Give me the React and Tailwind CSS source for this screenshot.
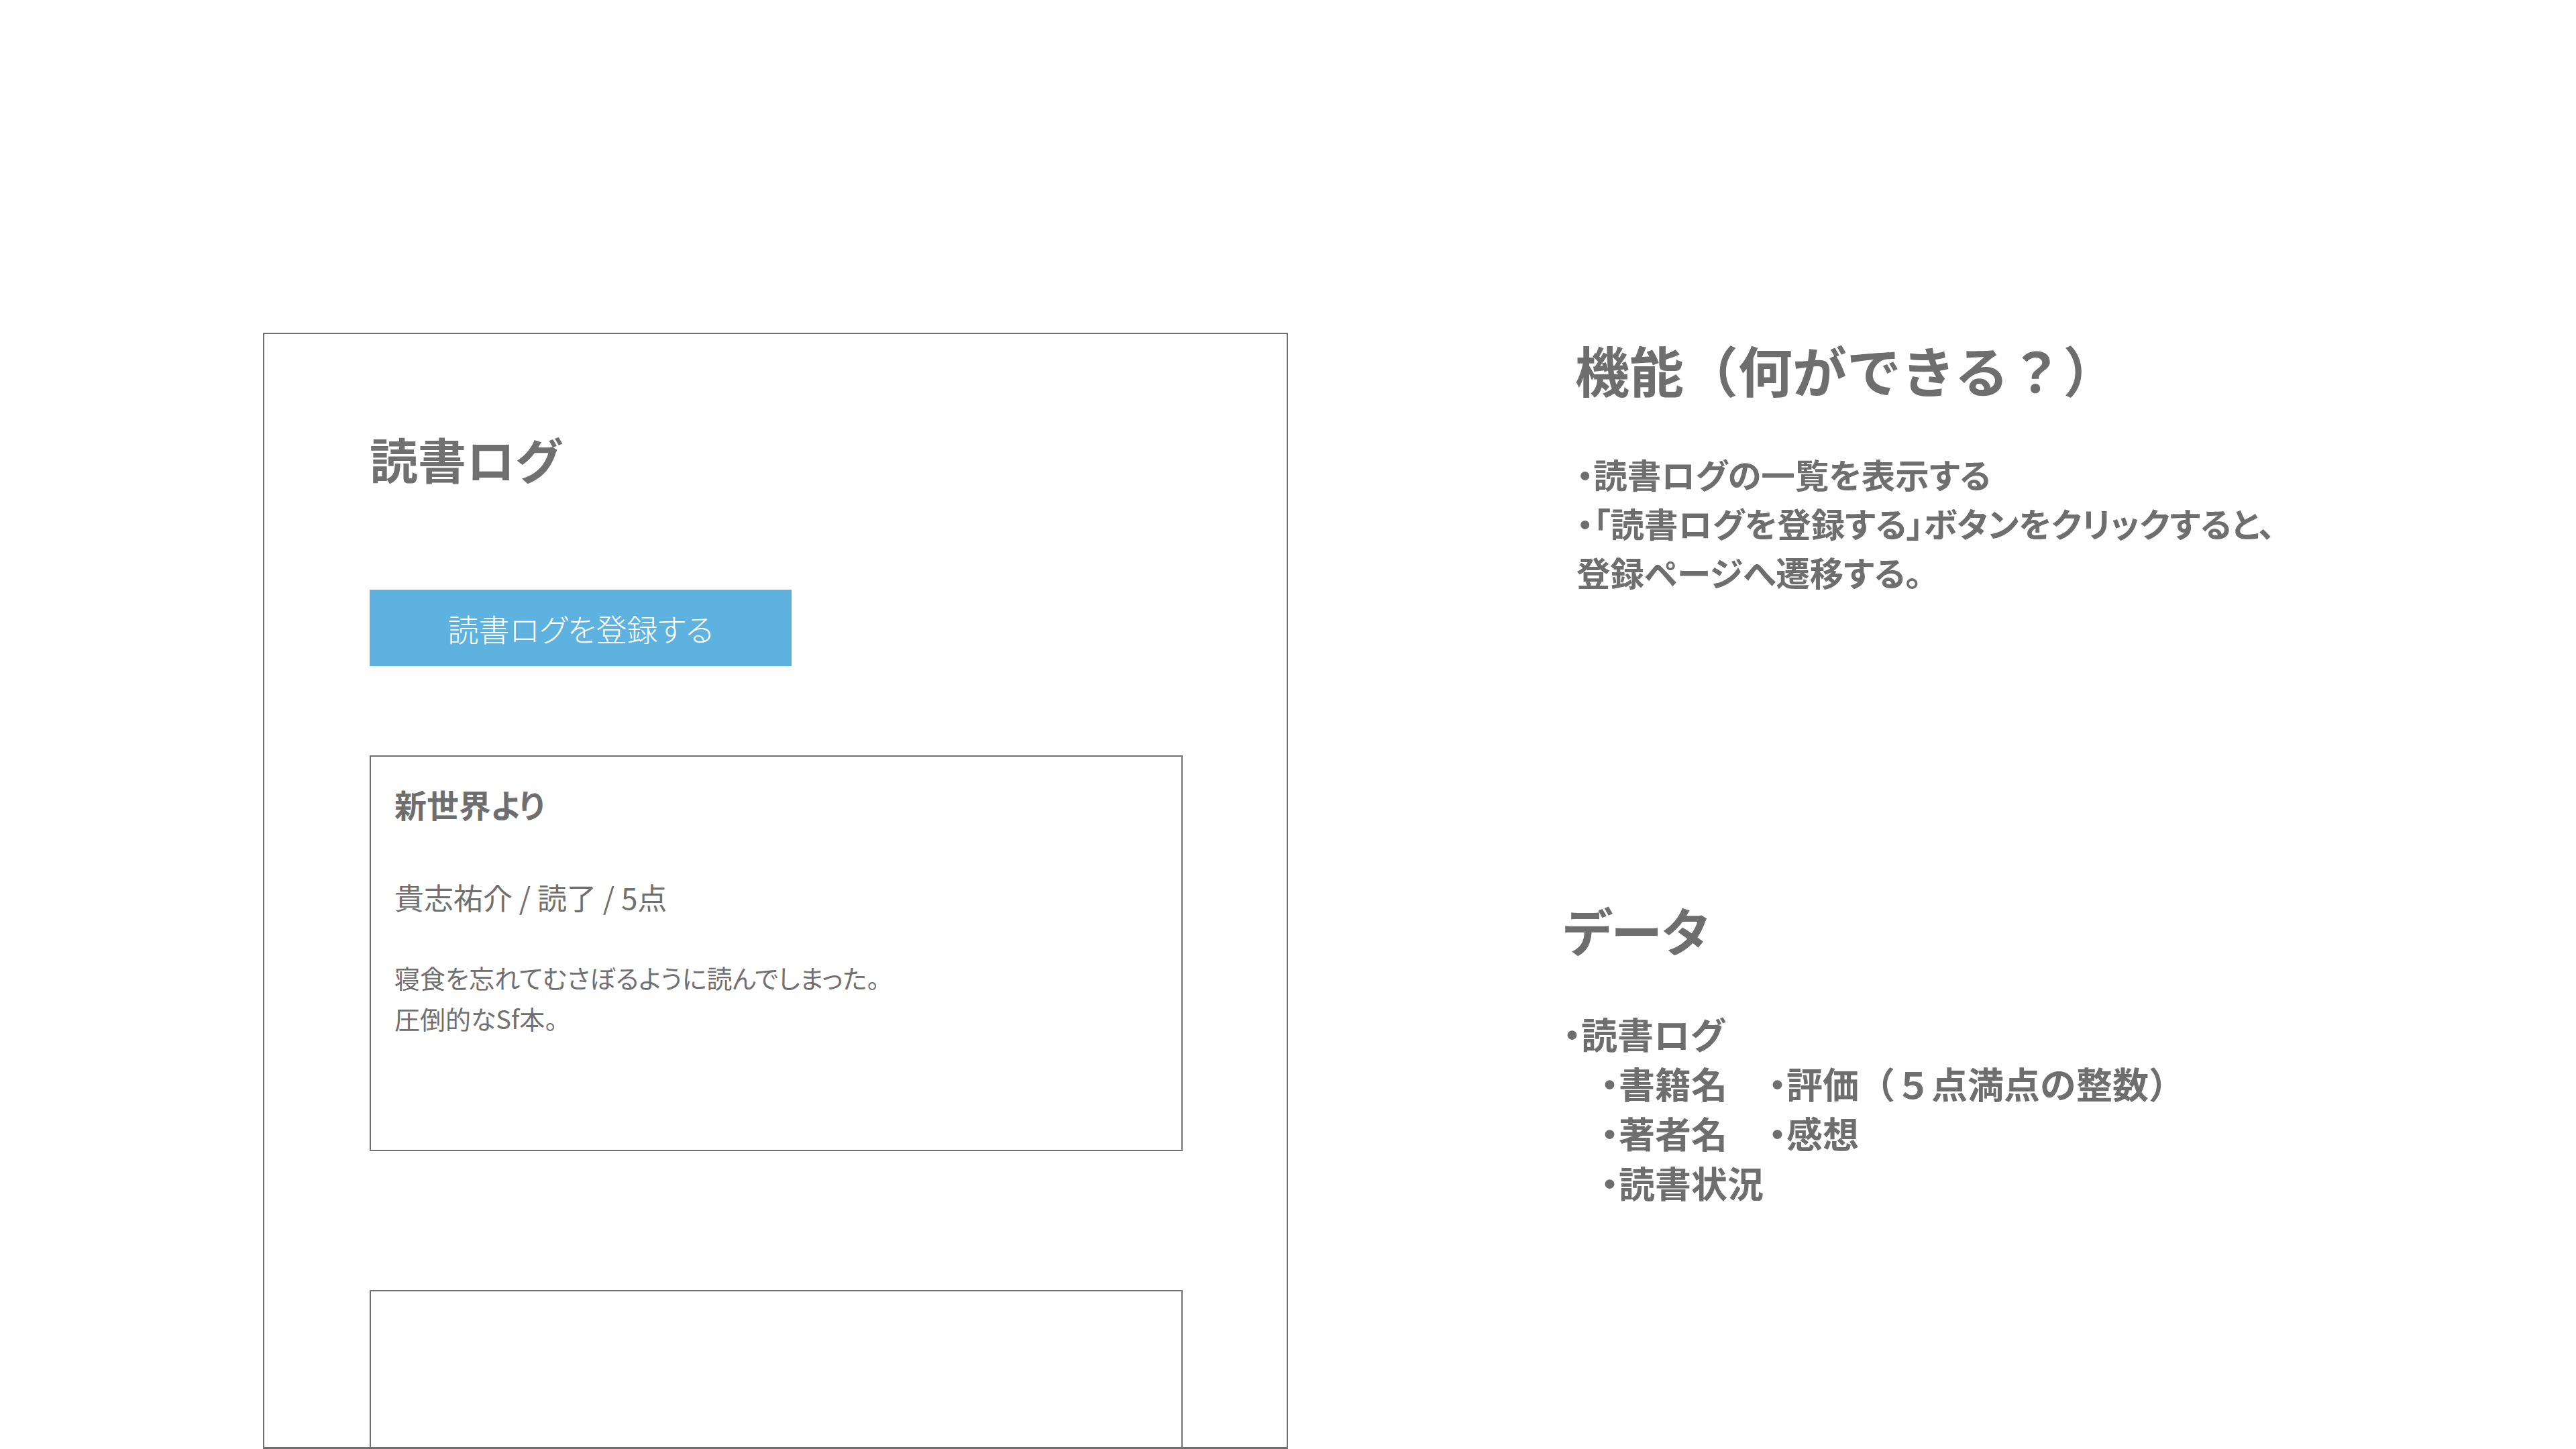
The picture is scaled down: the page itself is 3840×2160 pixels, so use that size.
const jp = "font-['Noto_Sans_CJK_JP',sans-serif]";
const palt = "[font-feature-settings:'palt']";

const BookCard = ({ book }) => (
  <div className="w-[1212px] h-[590px] shrink-0 border-2 border-[#707070] bg-white pl-[35px] pt-[46px]">
    {book && (
      <>
        <h2 className={`text-[48px] leading-none font-bold text-[#6e6e6e] ${palt}`}>{book.title}</h2>
        <p className={`mt-[93px] text-[44px] leading-none text-[#707070] ${palt}`}>
          {book.author} / {book.status} / {book.score}点
        </p>
        <p className={`mt-[67px] text-[38px] leading-[61px] text-[#707070] ${palt}`}>
          {book.comment.map((line) => (
            <span key={line} className="block">{line}</span>
          ))}
        </p>
      </>
    )}
  </div>
);

const books = [
  {
    title: '新世界より',
    author: '貴志祐介',
    status: '読了',
    score: 5,
    comment: ['寝食を忘れてむさぼるように読んでしまった。', '圧倒的なSf本。'],
  },
  null,
];

export default function App() {
  return (
    <div className={`w-[3840px] h-[2160px] bg-white flex overflow-hidden ${jp}`}>
      {/* 画面モック */}
      <div className="ml-[392px] mt-[496px] w-[1528px] h-[1664px] shrink-0 border-2 border-b-[3px] border-[#707070] overflow-hidden pl-[157px] pt-[149px] flex flex-col">
        <h1 className={`shrink-0 text-[72px] leading-none font-bold text-[#707070] ${palt}`}>読書ログ</h1>
        <button className={`shrink-0 mt-[160px] w-[629px] h-[114px] bg-[#5db2e0] text-white text-[46px] leading-none font-light ${palt}`}>
          読書ログを登録する
        </button>
        <div className="shrink-0 mt-[133px] flex flex-col gap-[207px]">
          {books.map((b, i) => (
            <BookCard key={i} book={b} />
          ))}
        </div>
      </div>

      {/* 説明 */}
      <div className="ml-[410px] mt-[509px] flex flex-col text-[#6e6e6e] font-bold">
        <h2 className="ml-[18px] text-[81px] leading-none">機能（何ができる？）</h2>
        <div className={`ml-[20px] mt-[80px] text-[50.5px] leading-[73px] ${palt}`}>
          <p>・読書ログの一覧を表示する</p>
          <p>・「読書ログを登録する」ボタンをクリックすると、</p>
          <p>登録ページへ遷移する。</p>
        </div>

        <h2 className={`mt-[458px] text-[77px] leading-none ${palt}`}>データ</h2>
        <div className={`mt-[80px] text-[54px] leading-[74px] ${palt}`}>
          <p>・読書ログ</p>
          <div className="pl-[56px] grid grid-cols-[250px_auto]">
            <p>・書籍名</p>
            <p>
              ・評価<span className="[font-feature-settings:normal]">（５点満点の整数）</span>
            </p>
            <p>・著者名</p>
            <p>・感想</p>
            <p>・読書状況</p>
          </div>
        </div>
      </div>
    </div>
  );
}
